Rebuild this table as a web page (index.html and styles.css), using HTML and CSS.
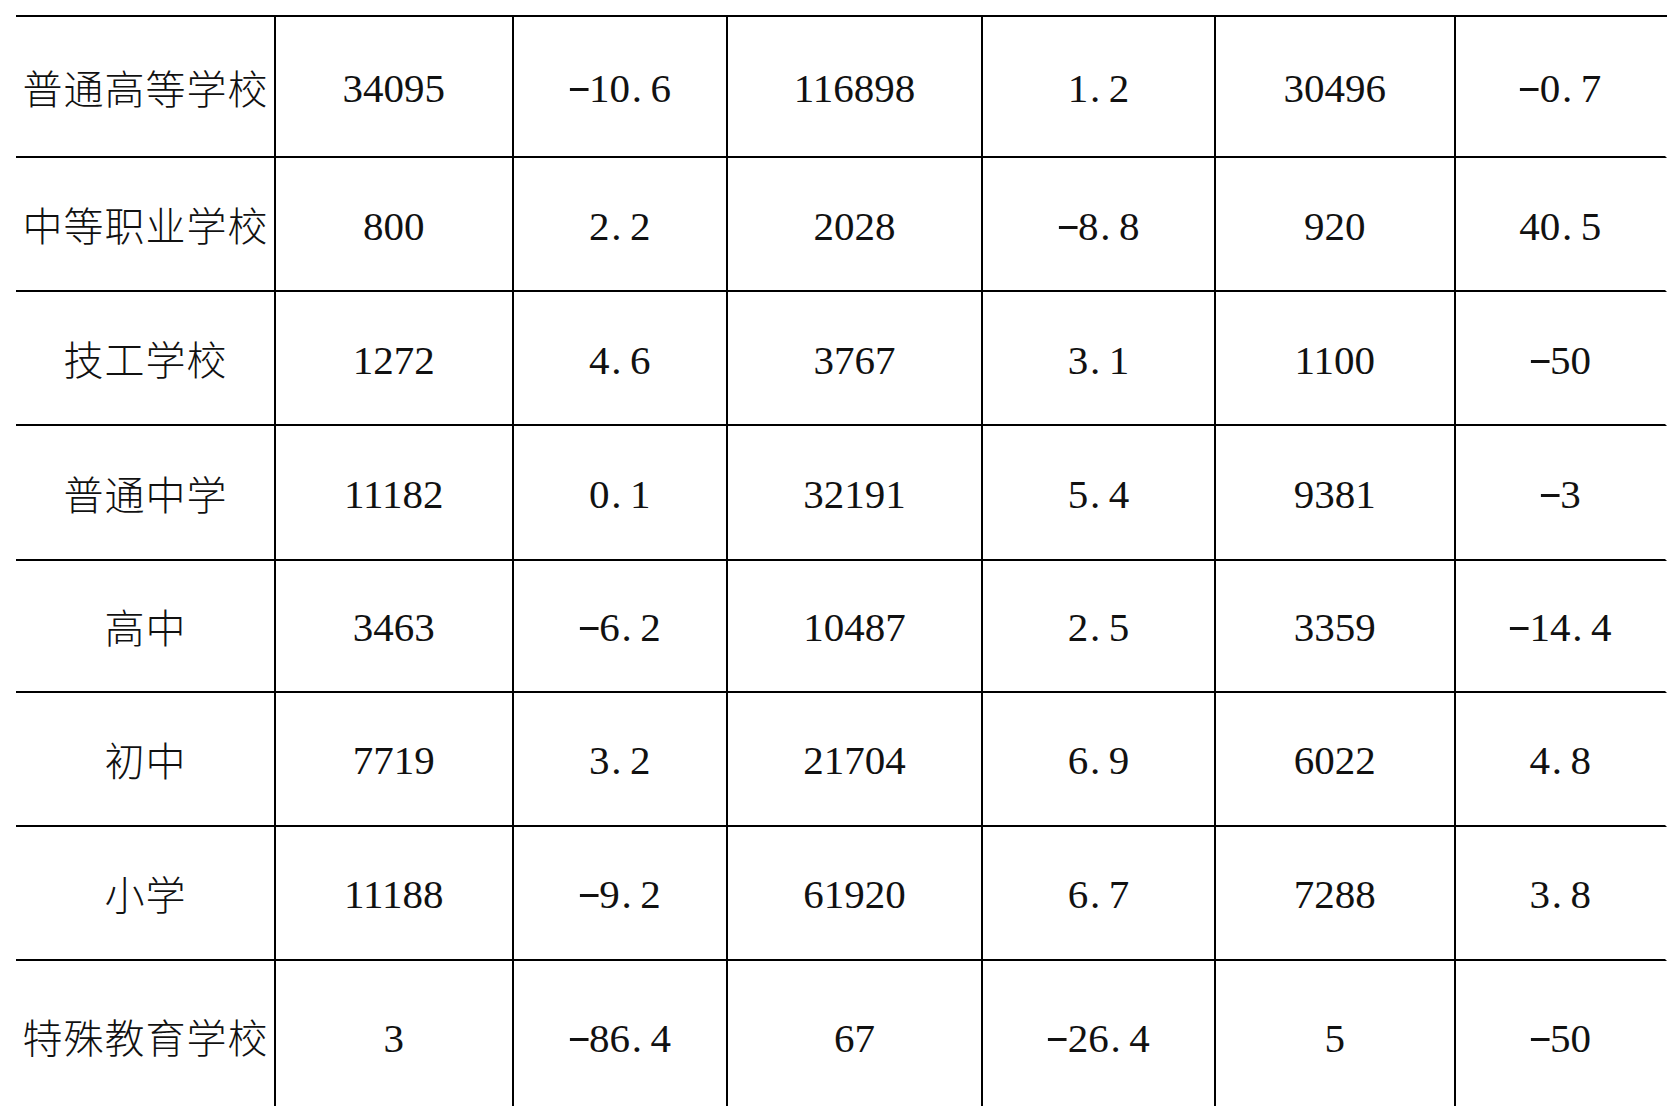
FILE: index.html
```html
<!DOCTYPE html>
<html lang="zh-CN">
<head>
<meta charset="utf-8">
<title>学校统计</title>
<link rel="stylesheet" href="styles.css">
</head>
<body>
<div class="page">
  <div class="grid" role="table">
    <div class="cell label">普通高等学校</div>
    <div class="cell">34095</div>
    <div class="cell"><span class="mn">-</span>10<span class="pt">.</span>6</div>
    <div class="cell">116898</div>
    <div class="cell">1<span class="pt">.</span>2</div>
    <div class="cell">30496</div>
    <div class="cell last"><span class="mn">-</span>0<span class="pt">.</span>7</div>

    <div class="cell label">中等职业学校</div>
    <div class="cell">800</div>
    <div class="cell">2<span class="pt">.</span>2</div>
    <div class="cell">2028</div>
    <div class="cell"><span class="mn">-</span>8<span class="pt">.</span>8</div>
    <div class="cell">920</div>
    <div class="cell last">40<span class="pt">.</span>5</div>

    <div class="cell label">技工学校</div>
    <div class="cell">1272</div>
    <div class="cell">4<span class="pt">.</span>6</div>
    <div class="cell">3767</div>
    <div class="cell">3<span class="pt">.</span>1</div>
    <div class="cell">1100</div>
    <div class="cell last"><span class="mn">-</span>50</div>

    <div class="cell label">普通中学</div>
    <div class="cell">11182</div>
    <div class="cell">0<span class="pt">.</span>1</div>
    <div class="cell">32191</div>
    <div class="cell">5<span class="pt">.</span>4</div>
    <div class="cell">9381</div>
    <div class="cell last"><span class="mn">-</span>3</div>

    <div class="cell label">高中</div>
    <div class="cell">3463</div>
    <div class="cell"><span class="mn">-</span>6<span class="pt">.</span>2</div>
    <div class="cell">10487</div>
    <div class="cell">2<span class="pt">.</span>5</div>
    <div class="cell">3359</div>
    <div class="cell last"><span class="mn">-</span>14<span class="pt">.</span>4</div>

    <div class="cell label">初中</div>
    <div class="cell">7719</div>
    <div class="cell">3<span class="pt">.</span>2</div>
    <div class="cell">21704</div>
    <div class="cell">6<span class="pt">.</span>9</div>
    <div class="cell">6022</div>
    <div class="cell last">4<span class="pt">.</span>8</div>

    <div class="cell label">小学</div>
    <div class="cell">11188</div>
    <div class="cell"><span class="mn">-</span>9<span class="pt">.</span>2</div>
    <div class="cell">61920</div>
    <div class="cell">6<span class="pt">.</span>7</div>
    <div class="cell">7288</div>
    <div class="cell last">3<span class="pt">.</span>8</div>

    <div class="cell label">特殊教育学校</div>
    <div class="cell">3</div>
    <div class="cell"><span class="mn">-</span>86<span class="pt">.</span>4</div>
    <div class="cell">67</div>
    <div class="cell"><span class="mn">-</span>26<span class="pt">.</span>4</div>
    <div class="cell">5</div>
    <div class="cell last"><span class="mn">-</span>50</div>
  </div>
</div>
</body>
</html>
```
FILE: styles.css
```css
html, body {
  margin: 0;
  padding: 0;
  background: #ffffff;
  overflow: hidden;
}

.page {
  height: 1106px;
  overflow: hidden;
  padding: 15px 0 0 16px;
  box-sizing: border-box;
}

.grid {
  display: grid;
  width: 1651px;
  box-sizing: border-box;
  grid-template-columns: 260px 237.5px 214.5px 255px 233px 239.5px 211.5px;
  grid-template-rows: 141px 134px 134px 135px 131.5px 134px 134.5px 152px;
  border-top: 2px solid #000;
}

.cell {
  display: flex;
  align-items: center;
  justify-content: center;
  box-sizing: border-box;
  border-right: 2px solid #000;
  border-bottom: 2px solid #000;
  padding-top: 4px;
  font-family: "Liberation Serif", "Noto Sans CJK SC", serif;
  font-size: 41px;
  line-height: 1;
  color: #111;
  white-space: nowrap;
}

.cell.last {
  border-right-color: transparent;
}

.label {
  font-family: "Noto Sans CJK SC", sans-serif;
  font-size: 40px;
  font-weight: 300;
  letter-spacing: 1px;
  padding-top: 0;
  padding-left: 1px;
}

.pt {
  display: inline-block;
  width: 0.5em;
  text-align: center;
  transform: translateX(-0.08em);
}

.mn {
  display: inline-block;
  width: 0.5em;
  text-align: center;
  transform: translateY(-0.07em) scaleX(1.75);
}
```
